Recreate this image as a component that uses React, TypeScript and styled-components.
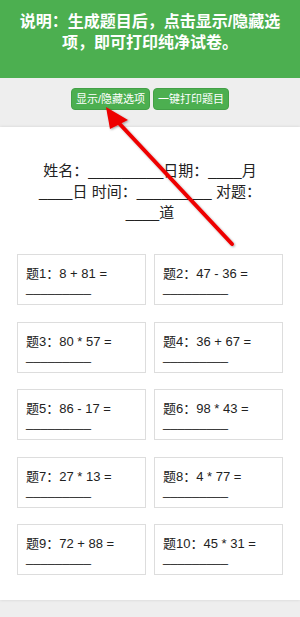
import styled, { createGlobalStyle } from "styled-components";

const GlobalStyle = createGlobalStyle`
  html, body {
    margin: 0;
    padding: 0;
    background: #eeeeee;
    font-family: "Liberation Sans", "Noto Sans CJK SC", sans-serif;
  }
`;

const questions = [
  "8 + 81 =",
  "47 - 36 =",
  "80 * 57 =",
  "36 + 67 =",
  "86 - 17 =",
  "98 * 43 =",
  "27 * 13 =",
  "4 * 77 =",
  "72 + 88 =",
  "45 * 31 =",
];

export default function App() {
  return (
    <Page>
      <GlobalStyle />
      <Header>说明：生成题目后，点击显示/隐藏选项，即可打印纯净试卷。</Header>
      <Toolbar>
        <GreenButton>显示/隐藏选项</GreenButton>
        <GreenButton>一键打印题目</GreenButton>
      </Toolbar>
      <Panel>
        <Info>
          姓名：_________日期：____月____日 时间：_________ 对题：____道
        </Info>
        <Grid>
          {questions.map((q, i) => (
            <Card key={i}>
              题{i + 1}：{q}
              <br />
              _________
            </Card>
          ))}
        </Grid>
      </Panel>
      <Arrow viewBox="0 0 300 617">
        <defs>
          <filter id="sh" x="-20%" y="-20%" width="140%" height="140%">
            <feDropShadow dx="1" dy="1" stdDeviation="1" floodColor="#000" floodOpacity="0.35" />
          </filter>
        </defs>
        <g filter="url(#sh)">
          <line x1="232" y1="244" x2="116" y2="120" stroke="#ee0000" strokeWidth="4" strokeLinecap="round" />
          <polygon points="106,107 128,120 110,129" fill="#ee0000" />
        </g>
      </Arrow>
    </Page>
  );
}

const Page = styled.div`
  position: relative;
  min-height: 617px;
`;

const Header = styled.div`
  box-sizing: border-box;
  height: 78px;
  padding: 11px 15px 0;
  background: #4caf50;
  color: #ffffff;
  font-weight: bold;
  font-size: 16px;
  line-height: 21px;
  text-align: center;
`;

const Toolbar = styled.div`
  display: flex;
  justify-content: center;
  gap: 3px;
  padding: 10px 0 17px;
`;

const GreenButton = styled.button`
  height: 22px;
  padding: 0 4px;
  border: 1px solid #43a047;
  border-radius: 4px;
  background: #4caf50;
  color: #ffffff;
  font-family: "Liberation Sans", "Noto Sans CJK SC", sans-serif;
  font-size: 11px;
  line-height: 20px;
`;

const Panel = styled.div`
  background: #ffffff;
  padding: 33px 17px 25px;
  box-shadow: 0 0 3px rgba(0, 0, 0, 0.12);
`;

const Info = styled.div`
  padding: 0 13px;
  font-size: 15px;
  line-height: 21px;
  color: #222222;
  text-align: center;
`;

const Grid = styled.div`
  display: grid;
  grid-template-columns: 1fr 1fr;
  column-gap: 8px;
  row-gap: 16.5px;
  margin-top: 31px;
`;

const Card = styled.div`
  box-sizing: border-box;
  height: 51px;
  padding: 12px 8px 0;
  border: 1px solid #dddddd;
  font-size: 13px;
  line-height: 14px;
  color: #222222;
`;

const Arrow = styled.svg`
  position: absolute;
  left: 0;
  top: 0;
  width: 300px;
  height: 617px;
  pointer-events: none;
`;
